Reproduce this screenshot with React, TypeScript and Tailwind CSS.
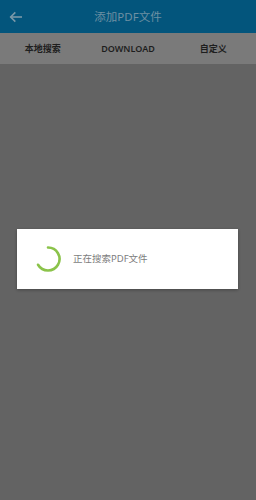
import React from "react";

const tabs = ["本地搜索", "DOWNLOAD", "自定义"];

const Spinner: React.FC = () => (
  <svg width="30" height="30" viewBox="0 0 30 30" className="shrink-0">
    <path
      d="M15 3.5 A11.5 11.5 0 1 1 5.04 20.75"
      fill="none"
      stroke="#8bc34a"
      strokeWidth="2.6"
      strokeLinecap="round"
    />
  </svg>
);

const App: React.FC = () => {
  return (
    <div
      className="relative w-[256px] h-[500px] overflow-hidden bg-[#636363]"
      style={{ fontFamily: '"Noto Sans", "Noto Sans CJK SC", sans-serif' }}
    >
      <header className="flex items-center h-[33px] bg-[#03557c]">
        <button type="button" aria-label="back" className="flex items-center justify-center w-[28px] h-full ml-[2px]">
          <svg width="16" height="16" viewBox="0 0 24 24" fill="none" stroke="#7a98a8" strokeWidth="2.4">
            <path d="M21 12H4" />
            <path d="M11 5l-7 7 7 7" />
          </svg>
        </button>
        <h1 className="flex-1 text-center text-[11.5px] text-[#6d90a3] -ml-[30px]">添加PDF文件</h1>
      </header>
      <nav className="flex items-center h-[31px] bg-[#7a7a7a]">
        {tabs.map(t => (
          <div key={t} className="flex-1 text-center text-[9px] font-semibold text-[#1e1e1e]">
            {t}
          </div>
        ))}
      </nav>
      <div className="absolute left-[17px] top-[229px] w-[221px] h-[60px] bg-white flex items-center shadow-[0_1px_3px_rgba(0,0,0,0.3)]">
        <div className="ml-[16px]">
          <Spinner />
        </div>
        <span className="ml-[10px] text-[9.5px] text-[#7d7d7d]">正在搜索PDF文件</span>
      </div>
    </div>
  );
};

export default App;
